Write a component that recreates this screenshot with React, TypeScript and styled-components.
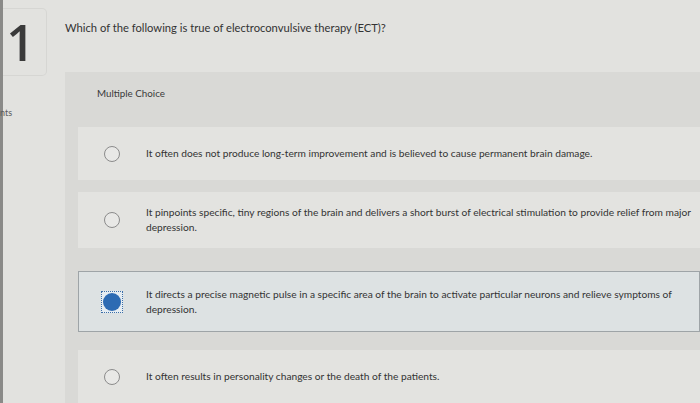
import React from 'react';
import styled, { createGlobalStyle } from 'styled-components';

const GlobalStyle = createGlobalStyle`
    html, body {
        margin: 0;
        padding: 0;
        background: #e2e2df;
    }
    body {
        font-family: Lato, "Open Sans", "Liberation Sans", sans-serif;
        color: #3b3b3b;
    }
`;

const Page = styled.div`
    display: flex;
    width: 700px;
    height: 403px;
    overflow: hidden;
    background: #e2e2df;
`;

const Sidebar = styled.div`
    width: 44px;
    flex-shrink: 0;
    border-left: 3px solid #8a8a88;
    display: flex;
    flex-direction: column;
`;

const NumberBox = styled.div`
    margin-top: 8px;
    height: 66px;
    border: 1px solid #d6d6d3;
    border-left: none;
    border-radius: 0 5px 5px 0;
    display: flex;
    align-items: center;
    justify-content: center;
    padding-right: 8px;
    font-family: "Open Sans", sans-serif;
    font-size: 50px;
    font-weight: 600;
    color: #3a3a3a;
`;

const PointsLabel = styled.div`
    margin-top: 31px;
    font-size: 9px;
    color: #5a5a5a;
    margin-left: -3px;
`;

const Main = styled.div`
    flex: 1;
    padding-left: 18px;
    display: flex;
    flex-direction: column;
`;

const Question = styled.div`
    margin-top: 20px;
    font-size: 11.2px;
    line-height: 15px;
    color: #333;
`;

const Panel = styled.div`
    margin-top: 37px;
    flex: 1;
    background: #d9d9d6;
    padding-left: 13px;
    display: flex;
    flex-direction: column;
`;

const TypeLabel = styled.div`
    margin-top: 15px;
    margin-left: 19px;
    font-size: 9.8px;
    line-height: 12px;
    color: #3a3a3a;
`;

const OptionList = styled.div`
    display: flex;
    flex-direction: column;
`;

const OptionRow = styled.div<{ $selected?: boolean; $height: number; $gap: number }>`
    display: flex;
    align-items: center;
    margin-top: ${(p) => p.$gap}px;
    height: ${(p) => p.$height}px;
    background: ${(p) => (p.$selected ? '#dde2e3' : '#e3e3e0')};
    border: 1px solid ${(p) => (p.$selected ? '#9ea4a7' : 'transparent')};
    box-sizing: border-box;
`;

const RadioWrap = styled.div`
    width: 22px;
    height: 22px;
    margin-left: 22px;
    flex-shrink: 0;
    display: flex;
    align-items: center;
    justify-content: center;
`;

const Radio = styled.div`
    width: 16px;
    height: 16px;
    border: 1.3px solid #8b8b8b;
    border-radius: 50%;
    box-sizing: border-box;
    background: #e8e8e6;
`;

const FocusRing = styled.div`
    width: 22px;
    height: 22px;
    border: 1px dotted #3d6fa8;
    box-sizing: border-box;
    display: flex;
    align-items: center;
    justify-content: center;
    background: #e6edf2;
`;

const RadioSelected = styled.div`
    width: 18px;
    height: 18px;
    border-radius: 50%;
    background: #2d6bb3;
`;

const OptionText = styled.div`
    margin-left: 23px;
    margin-right: 2px;
    font-size: 10.2px;
    line-height: 15px;
    color: #333;
`;

const options = [
    { text: 'It often does not produce long-term improvement and is believed to cause permanent brain damage.', height: 53, gap: 28 },
    { text: 'It pinpoints specific, tiny regions of the brain and delivers a short burst of electrical stimulation to provide relief from major depression.', height: 56, gap: 12 },
    { text: 'It directs a precise magnetic pulse in a specific area of the brain to activate particular neurons and relieve symptoms of depression.', height: 61, gap: 23, selected: true },
    { text: 'It often results in personality changes or the death of the patients.', height: 53, gap: 18 },
];

const App: React.FunctionComponent = () => {
    return (
        <>
            <GlobalStyle />
            <Page>
                <Sidebar>
                    <NumberBox>1</NumberBox>
                    <PointsLabel>nts</PointsLabel>
                </Sidebar>
                <Main>
                    <Question>Which of the following is true of electroconvulsive therapy (ECT)?</Question>
                    <Panel>
                        <TypeLabel>Multiple Choice</TypeLabel>
                        <OptionList>
                            {options.map((o) => (
                                <OptionRow key={o.text} $selected={o.selected} $height={o.height} $gap={o.gap}>
                                    <RadioWrap>
                                        {o.selected ? (
                                            <FocusRing><RadioSelected /></FocusRing>
                                        ) : (
                                            <Radio />
                                        )}
                                    </RadioWrap>
                                    <OptionText>{o.text}</OptionText>
                                </OptionRow>
                            ))}
                        </OptionList>
                    </Panel>
                </Main>
            </Page>
        </>
    );
};

export default App;
